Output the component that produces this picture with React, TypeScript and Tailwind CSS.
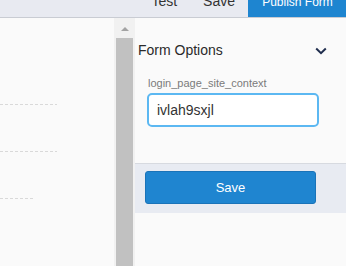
import React from "react";

const dash = "bg-[repeating-linear-gradient(90deg,#d9d9d9_0px,#d9d9d9_3px,transparent_3px,transparent_5px)]";

export default function App() {
  return (
    <div className="w-[346px] h-[266px] overflow-hidden bg-[#fafafa] flex flex-col" style={{ fontFamily: "Arial, 'Liberation Sans', sans-serif" }}>
      <div className="h-[18px] shrink-0 bg-[#e8eaf1] border-b border-[#c9ccd3] flex justify-end items-end text-[14px] text-[#333] overflow-hidden">
        <div className="flex items-end h-full">
          <span className="leading-none mb-[9px] mr-[26px]">Test</span>
          <span className="leading-none mb-[9px] mr-[13px]">Save</span>
          <div className="w-[98px] h-[17px] self-start bg-[#1e85d0] text-white text-[12px] flex items-end justify-center">
            <span className="leading-none mb-[9px] ml-[1px]">Publish Form</span>
          </div>
        </div>
      </div>
      <div className="flex flex-1 min-h-0">
        <div className="w-[114px] shrink-0 relative">
          <div className={`absolute left-0 top-[86px] w-[57px] h-px ${dash}`} />
          <div className={`absolute left-0 top-[133px] w-[57px] h-px ${dash}`} />
          <div className={`absolute left-0 top-[180px] w-[34px] h-px ${dash}`} />
        </div>
        <div className="w-[21px] shrink-0 bg-[#f1f1f1] flex flex-col items-center">
          <div className="mt-[9px] w-0 h-0 border-l-[4px] border-r-[4px] border-b-[4px] border-l-transparent border-r-transparent border-b-[#a3a3a3]" />
          <div className="mt-[7px] w-[17px] flex-1 bg-[#c1c1c1]" />
        </div>
        <div className="flex-1 flex flex-col">
          <div className="h-[48px] flex items-center justify-between pl-[3px] pr-[19px] pt-[16px]">
            <span className="text-[14px] text-[#2a2a2a]">Form Options</span>
            <svg width="12" height="8" viewBox="0 0 12 8" fill="none" className="mt-[2px]">
              <path d="M1.2 1.5 L6 6.2 L10.8 1.5" stroke="#1f2d4d" strokeWidth="2" />
            </svg>
          </div>
          <div className="pl-[12px] pt-[11px]">
            <div className="text-[11px] leading-[13px] text-[#7a7a7a] pl-[1px]">login_page_site_context</div>
            <div className="mt-[3px] w-[172px] h-[34px] rounded-[5px] border-2 border-[#5cb8f2] bg-white flex items-center pl-[8px] text-[14px] text-[#333]">ivlah9sxjl</div>
          </div>
          <div className="mt-[36px] h-[50px] bg-[#e8ebf2] border-t border-[#d7dae0] pl-[10px] pt-[7px]">
            <div className="w-[171px] h-[33px] rounded-[3px] bg-[#1f85d0] border border-[#1a73b8] text-white text-[13px] flex items-center justify-center">Save</div>
          </div>
        </div>
      </div>
    </div>
  );
}
